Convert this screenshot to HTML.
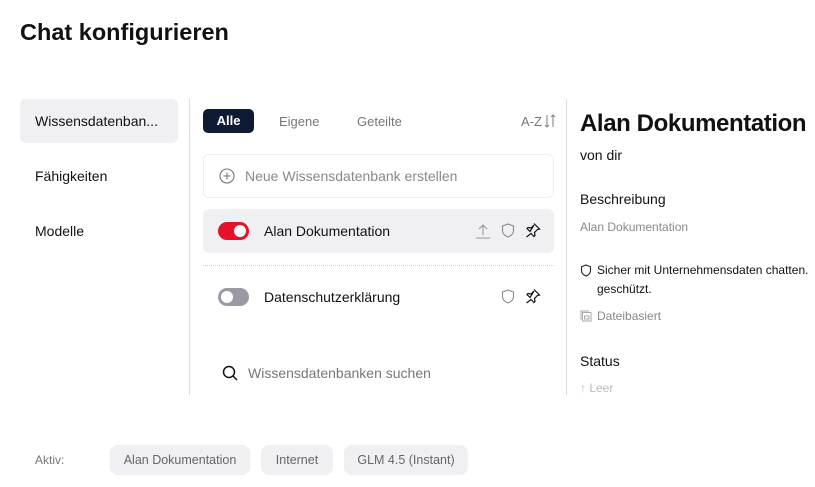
<!DOCTYPE html>
<html><head><meta charset="utf-8"><style>
*{margin:0;padding:0;box-sizing:border-box}
body{width:815px;height:487px;background:#fff;font-family:"Liberation Sans",sans-serif;position:relative;overflow:hidden;color:#111}
.a{position:absolute;white-space:nowrap}
.chip{position:absolute;top:445px;height:30px;background:#f0f0f3;border-radius:8px;font-size:12.5px;color:#666;display:flex;align-items:center;justify-content:center}
.tg{position:absolute;width:31px;height:18px;border-radius:9px}
.tg i{position:absolute;top:3px;width:12px;height:12px;border-radius:50%;background:#fff}
</style></head><body>
<div class="a" style="left:20px;top:19px;font-size:23.5px;font-weight:bold">Chat konfigurieren</div>

<div class="a" style="left:20px;top:99px;width:158px;height:44px;background:#f0f0f3;border-radius:6px"></div>
<div class="a" style="left:35px;top:113px;font-size:14px">Wissensdatenban...</div>
<div class="a" style="left:35px;top:168px;font-size:14px">Fähigkeiten</div>
<div class="a" style="left:35px;top:223px;font-size:14px">Modelle</div>

<div class="a" style="left:189px;top:99px;width:1px;height:296px;background:#ddd"></div>
<div class="a" style="left:566px;top:99px;width:1px;height:296px;background:#ddd"></div>

<div class="a" style="left:203px;top:109px;width:51px;height:24px;background:#0f1b33;border-radius:5px;color:#fff;font-weight:bold;font-size:13px;text-align:center;line-height:24px">Alle</div>
<div class="a" style="left:279px;top:114px;font-size:13px;color:#777">Eigene</div>
<div class="a" style="left:357px;top:114px;font-size:13px;color:#777">Geteilte</div>
<div class="a" style="left:521px;top:114px;font-size:13px;color:#777">A-Z</div>
<svg class="a" style="left:544px;top:114px" width="12" height="14" viewBox="0 0 12 14" fill="none" stroke="#888" stroke-width="1.1"><path d="M3 1v12M1 11l2 2 2-2M9 13V1M7 3l2-2 2 2"/></svg>

<div class="a" style="left:203px;top:154px;width:351px;height:44px;border:1px solid #eee;border-radius:6px"></div>
<svg class="a" style="left:219px;top:168px" width="16" height="16" viewBox="0 0 16 16" fill="none" stroke="#777" stroke-width="1.1"><circle cx="8" cy="8" r="7"/><path d="M8 4.5v7M4.5 8h7"/></svg>
<div class="a" style="left:245px;top:168px;font-size:14px;color:#888">Neue Wissensdatenbank erstellen</div>

<div class="a" style="left:203px;top:209px;width:351px;height:44px;background:#f0f0f3;border-radius:6px"></div>
<div class="tg" style="left:218px;top:222px;background:#e5122e"><i style="left:16px"></i></div>
<div class="a" style="left:264px;top:223px;font-size:14px">Alan Dokumentation</div>
<svg class="a" style="left:475px;top:223px" width="16" height="16" viewBox="0 0 16 16" fill="none" stroke="#999" stroke-width="1.1"><path d="M8 12V2M4 6l4-4 4 4M1 15h14"/></svg>
<svg class="a" style="left:501px;top:223px" width="14" height="15" viewBox="0 0 14 15" fill="none" stroke="#888" stroke-width="1.1"><path d="M7 1l5.5 2v4.5c0 3.5-3 5.5-5.5 6.5C4.5 13 1.5 11 1.5 7.5V3z"/></svg>
<svg class="a" style="left:525px;top:222px" width="16" height="16" viewBox="0 0 16 16" fill="none" stroke="#111" stroke-width="1.2"><path d="M9 1.5l5.5 5.5-2 .5-3 3 .5 3-1 1-3-3L1.5 15M5 9.5L2 6.5l1-1 3 .5 3-3z"/></svg>

<div class="a" style="left:203px;top:265px;width:351px;border-top:1px dotted #ccc"></div>

<div class="tg" style="left:218px;top:288px;background:#9a9aa5"><i style="left:3px"></i></div>
<div class="a" style="left:264px;top:289px;font-size:14px">Datenschutzerklärung</div>
<svg class="a" style="left:501px;top:289px" width="14" height="15" viewBox="0 0 14 15" fill="none" stroke="#888" stroke-width="1.1"><path d="M7 1l5.5 2v4.5c0 3.5-3 5.5-5.5 6.5C4.5 13 1.5 11 1.5 7.5V3z"/></svg>
<svg class="a" style="left:525px;top:288px" width="16" height="16" viewBox="0 0 16 16" fill="none" stroke="#111" stroke-width="1.2"><path d="M9 1.5l5.5 5.5-2 .5-3 3 .5 3-1 1-3-3L1.5 15M5 9.5L2 6.5l1-1 3 .5 3-3z"/></svg>

<svg class="a" style="left:222px;top:365px" width="16" height="16" viewBox="0 0 16 16" fill="none" stroke="#111" stroke-width="1.5"><circle cx="7" cy="7" r="5.5"/><path d="M11 11l4 4"/></svg>
<div class="a" style="left:248px;top:365px;font-size:14px;color:#777">Wissensdatenbanken suchen</div>

<div class="a" style="left:580px;top:110px;font-size:24px;font-weight:bold;letter-spacing:-0.4px">Alan Dokumentation</div>
<div class="a" style="left:580px;top:147px;font-size:14px">von dir</div>
<div class="a" style="left:580px;top:191px;font-size:14px">Beschreibung</div>
<div class="a" style="left:580px;top:220px;font-size:12px;color:#888">Alan Dokumentation</div>
<svg class="a" style="left:580px;top:264px" width="12" height="13" viewBox="0 0 12 13" fill="none" stroke="#222" stroke-width="1.1"><path d="M6 1l4.5 1.7v3.8c0 3-2.5 4.7-4.5 5.5C4 11.2 1.5 9.5 1.5 6.5V2.7z"/></svg>
<div class="a" style="left:597px;top:263px;font-size:12px">Sicher mit Unternehmensdaten chatten.</div>
<div class="a" style="left:597px;top:282px;font-size:12px">geschützt.</div>
<svg class="a" style="left:580px;top:310px" width="12" height="12" viewBox="0 0 12 12" fill="none" stroke="#aaa" stroke-width="1"><rect x="2.5" y="2.5" width="8.5" height="8.5"/><path d="M1 10V1h8"/><rect x="4.5" y="6" width="4.5" height="3"/></svg>
<div class="a" style="left:597px;top:309px;font-size:12px;color:#888">Dateibasiert</div>
<div class="a" style="left:580px;top:353px;font-size:14px">Status</div>
<div class="a" style="left:580px;top:381px;font-size:12px;color:#bbb;height:14px;overflow:hidden">↑ Leer</div>

<div class="a" style="left:35px;top:453px;font-size:12px;color:#777">Aktiv:</div>
<div class="chip" style="left:110px;width:140px">Alan Dokumentation</div>
<div class="chip" style="left:261px;width:72px">Internet</div>
<div class="chip" style="left:344px;width:124px">GLM 4.5 (Instant)</div>
</body></html>
